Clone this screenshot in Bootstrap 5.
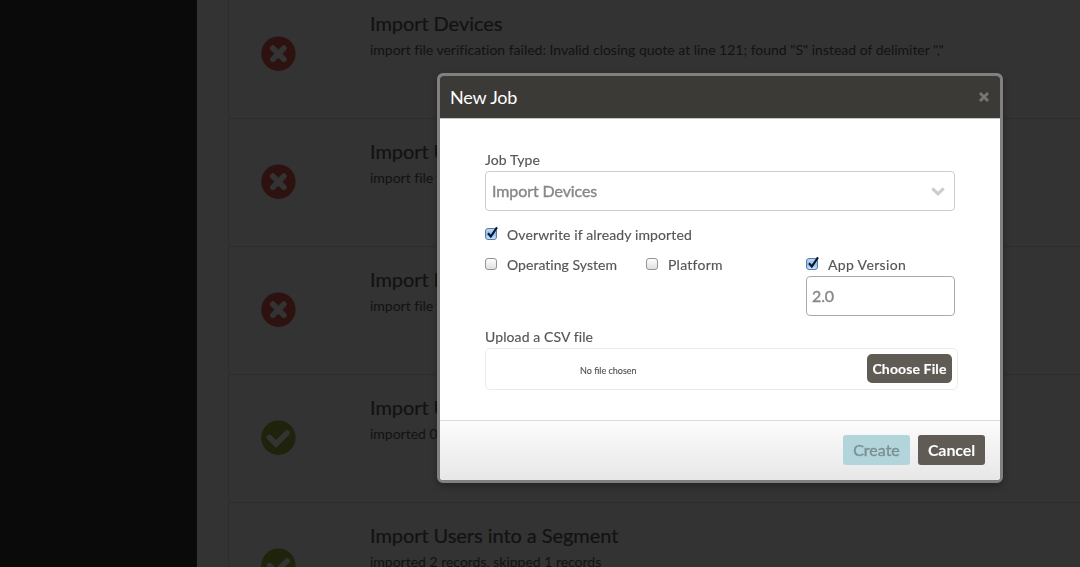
<!DOCTYPE html>
<html lang="en">
<head>
<meta charset="utf-8">
<meta name="viewport" content="width=device-width, initial-scale=1">
<title>Jobs</title>
<link href="https://cdn.jsdelivr.net/npm/bootstrap@5.3.0/dist/css/bootstrap.min.css" rel="stylesheet">
<style>
  body { font-family: Lato, sans-serif; font-size: 14px; line-height: 20px; color: #121212; background: #333; height: 567px; }
  .side { width: 197px; background: #0a0a0a; border-right: 1px solid #0d0d0d; }
  .jobs { margin-left: 31px; border-left: 1px solid #2d2d2d; }
  .job { height: 128px; border-bottom: 1px solid #2d2d2d; padding: 18px 0 0 31px; flex: none; }
  .job:first-child { height: 119px; padding-top: 9px; }
  .job svg { width: 36px; height: 36px; margin-top: 27px; margin-right: 74px; flex: none; }
  .job h4 { font-size: 20px; line-height: 28px; font-weight: 400; margin: 0 0 3px; white-space: nowrap; letter-spacing: -.06px; -webkit-text-stroke: .2px; }
  .job p { margin: 0; white-space: nowrap; letter-spacing: -.01px; }
  .modal-dialog { width: 566px; max-width: none; margin: 73px 0 0 437px; }
  .modal-content { height: 410px; border: 3px solid #808080; border-radius: 6px; background-clip: border-box; box-shadow: 0 3px 7px rgba(0,0,0,.3); }
  .modal-header { height: 43px; padding: 0 10px; background: #3c3a36; border-bottom: 1px solid #c4c4c2; border-radius: 3px 3px 0 0; flex: none; }
  .modal-title { font-size: 18px; line-height: 24px; font-weight: 400; color: #fff; letter-spacing: -.15px; }
  .shut { border: 0; padding: 0; background: none; line-height: 0; }
  .modal-body { padding: 31px 42px 0 45px; color: #555; letter-spacing: .1px; -webkit-text-stroke: .15px; }
  .field { height: 40px; border: 1px solid #ccc; border-radius: 4px; font-size: 16px; color: #888; padding: 0 10px 0 6px; width: 470px; letter-spacing: -.1px; background: #fff; margin-top: 1px; -webkit-text-stroke: .4px; }
  .field svg { position: relative; left: 1px; }
  .version { width: 149px; border-color: #aaa; padding-left: 5px; }
  .tick { width: 14px; height: 15px; margin: -3px 8px 0 0; flex: none; }
  .opt { height: 20px; width: 161px; letter-spacing: .03px; }
  .opt.mid { width: 160px; letter-spacing: .25px; }
  .opt.last { width: auto; letter-spacing: .35px; }
  .opt.all { width: 100%; margin: 14px 0 10px; letter-spacing: .12px; }
  .csv { margin-top: 11px; }
  .upload { height: 42px; width: 473px; border: 1px solid #ebebeb; border-radius: 5px; padding: 0 5px 0 94px; margin-top: 1px; }
  .upload span { font-size: 9px; letter-spacing: 0; padding-top: 3px; }
  .act { border: 0; color: #fff; background: #605b55; font-weight: 700; font-size: 16px; line-height: 20px; padding: 0 0 1px; width: 67px; height: 30px; border-radius: 3px; letter-spacing: -.1px; }
  .pick { width: 85px; height: 29px; border-radius: 5px; font-size: 14px; margin-bottom: 1px; padding: 0; letter-spacing: .12px; }
  .act.make { background: #b2d5dc; color: #7b9095; font-weight: 400; letter-spacing: 0; -webkit-text-stroke: .4px; }
  .modal-footer { height: 60px; padding: 0 15px 1px; gap: 8px; border-top: 1px solid #ddd; background: linear-gradient(#fcfcfc, #e7e7e7); border-radius: 0 0 3px 3px; flex: none; }
  .modal-footer > * { margin: 0; }
</style>
</head>
<body class="overflow-hidden">
<svg class="d-none">
  <symbol id="bad" viewBox="0 0 36 36"><circle cx="18.4" cy="17.7" r="17.2" fill="#2d1210"/><path d="M12.900 12.200l11 11M23.900 12.200l-11 11" stroke="#333" stroke-width="5.800" stroke-linecap="round"/></symbol>
  <symbol id="good" viewBox="0 0 36 36"><circle cx="18.4" cy="17.7" r="17.2" fill="#20230c"/><path d="M9.500 17.500l6.500 6.500 11-11" fill="none" stroke="#333" stroke-width="5.500" stroke-linecap="round"/></symbol>
  <symbol id="off" viewBox="0 0 14 15"><rect x=".5" y="2.500" width="11" height="11" rx="2.500" fill="url(#gray)" stroke="#949494"/></symbol>
  <symbol id="on" viewBox="0 0 14 15"><rect x=".5" y="2.500" width="11" height="11" rx="2.500" fill="url(#blue)" stroke="#5a7a9f"/><path d="M3 7.300l2.800 3.200L12 1.300" fill="none" stroke="#08152a" stroke-width="2.100"/></symbol>
</svg>
<svg width="0" height="0" class="position-absolute"><defs>
  <linearGradient id="gray" x2="0" y2="1"><stop stop-color="#fff"/><stop offset="1" stop-color="#dedede"/></linearGradient>
  <linearGradient id="blue" x2="0" y2="1"><stop stop-color="#c3dcf5"/><stop offset=".5" stop-color="#8dbdeb"/><stop offset="1" stop-color="#c8eaff"/></linearGradient>
</defs></svg>

<div class="d-flex h-100 overflow-hidden">
  <aside class="side flex-shrink-0"></aside>
  <main class="jobs flex-grow-1 d-flex flex-column">
    <div class="job d-flex"><svg><use href="#bad"/></svg><div><h4>Import Devices</h4><p>import file verification failed: Invalid closing quote at line 121; found "S" instead of delimiter ","</p></div></div>
    <div class="job d-flex"><svg><use href="#bad"/></svg><div><h4>Import U</h4><p>import file v</p></div></div>
    <div class="job d-flex"><svg><use href="#bad"/></svg><div><h4>Import D</h4><p>import file v</p></div></div>
    <div class="job d-flex"><svg><use href="#good"/></svg><div><h4>Import U</h4><p>imported 0</p></div></div>
    <div class="job d-flex"><svg><use href="#good"/></svg><div><h4>Import Users into a Segment</h4><p>imported 2 records, skipped 1 records</p></div></div>
  </main>
</div>

<div class="modal d-block overflow-hidden" tabindex="-1">
  <div class="modal-dialog">
    <div class="modal-content">
      <div class="modal-header">
        <h5 class="modal-title">New Job</h5>
        <button class="shut" type="button" aria-label="Close"><svg width="12" height="12" viewBox="0 0 12 12"><path d="M2 2l8 8M10 2l-8 8" stroke="#777572" stroke-width="3"/></svg></button>
      </div>
      <div class="modal-body">
        <div>Job Type</div>
        <div class="field d-flex align-items-center justify-content-between"><span>Import Devices</span><svg width="14" height="10" viewBox="0 0 14 10"><path d="M1.300 2.300L7 7.800 12.700 2.300" fill="none" stroke="#ccc" stroke-width="3"/></svg></div>
        <div class="opt all d-flex align-items-center"><svg class="tick"><use href="#on"/></svg>Overwrite if already imported</div>
        <div class="d-flex">
          <div class="opt d-flex align-items-center"><svg class="tick"><use href="#off"/></svg>Operating System</div>
          <div class="opt mid d-flex align-items-center"><svg class="tick"><use href="#off"/></svg>Platform</div>
          <div><div class="opt last d-flex align-items-center"><svg class="tick"><use href="#on"/></svg>App Version</div>
          <div class="field version d-flex align-items-center">2.0</div></div>
        </div>
        <div class="csv">Upload a CSV file</div>
        <div class="upload d-flex align-items-center justify-content-between"><span>No file chosen</span><button class="act pick" type="button">Choose File</button></div>
      </div>
      <div class="modal-footer">
        <button class="act make" type="button">Create</button>
        <button class="act" type="button">Cancel</button>
      </div>
    </div>
  </div>
</div>
<script src="https://cdn.jsdelivr.net/npm/bootstrap@5.3.0/dist/js/bootstrap.bundle.min.js"></script>
</body>
</html>
